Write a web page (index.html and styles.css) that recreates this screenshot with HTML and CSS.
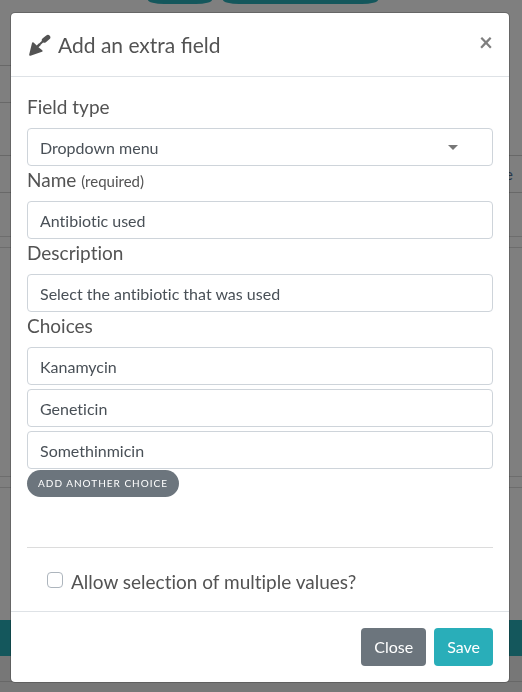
FILE: index.html
```html
<!DOCTYPE html>
<html lang="en">
<head>
<meta charset="utf-8">
<meta name="viewport" content="width=device-width, initial-scale=1">
<title>Add an extra field</title>
<link rel="stylesheet" href="styles.css">
</head>
<body>
<div class="page" aria-hidden="true">
  <div class="pills"><span class="pill"></span><span class="pill pill-wide"></span></div>
  <div class="tab"></div>
  <div class="toolbar">e</div>
  <div class="panel-end"></div>
  <div class="panel"></div>
  <div class="panel-start"></div>
  <div class="band"></div>
  <div class="page-foot"></div>
</div>
<div class="backdrop">
  <form class="modal" role="dialog" aria-labelledby="modal-title">
    <header class="modal-header">
      <h1 class="modal-title" id="modal-title">
        <svg class="trowel" viewBox="0 0 24 24" aria-hidden="true">
          <path d="M2.200 21.500 5 10Q5.500 8.600 6.600 9.600L9.700 12.500 11.800 10.400 13.600 12.200 11.500 14.300 15.300 17.300Q16.200 18.300 15 18.800L3.500 22.700Q1.900 23 2.200 21.500Z"/>
          <path d="M12.500 11.500 17 7.300" class="neck"/>
          <path d="M17.300 7.200 20.800 4.400" class="grip"/>
        </svg>
        Add an extra field
      </h1>
      <button class="close" type="button" aria-label="Dismiss">×</button>
    </header>
    <div class="modal-body">
      <label class="label" for="type">Field type</label>
      <select class="control select" id="type"><option>Dropdown menu</option></select>
      <label class="label" for="name">Name <span class="hint">(required)</span></label>
      <input class="control" id="name" type="text" value="Antibiotic used" required>
      <label class="label" for="description">Description</label>
      <input class="control" id="description" type="text" value="Select the antibiotic that was used">
      <label class="label" for="choice">Choices</label>
      <div class="choices">
        <input class="control" id="choice" type="text" value="Kanamycin">
        <input class="control" type="text" value="Geneticin" aria-label="Choice 2">
        <input class="control" type="text" value="Somethinmicin" aria-label="Choice 3">
      </div>
      <button class="add" type="button">Add another choice</button>
      <hr class="rule">
      <div class="check">
        <input class="checkbox" type="checkbox" id="multiple">
        <label for="multiple">Allow selection of multiple values?</label>
      </div>
    </div>
    <footer class="modal-footer">
      <button class="btn btn-secondary" type="button">Close</button>
      <button class="btn btn-primary" type="submit">Save</button>
    </footer>
  </form>
</div>
</body>
</html>
```
FILE: styles.css
```css
* { box-sizing: border-box; }

body {
  margin: 0;
  background: #fff;
  color: #535353;
  font-family: Lato, "Liberation Sans", sans-serif;
  font-size: 16px;
  line-height: 24px;
  font-variant-ligatures: no-common-ligatures;
  overflow: hidden;
}

button, input, select {
  font: inherit;
  font-variant-ligatures: inherit;
}

/* Page behind the dialog */
.page {
  display: flex;
  flex-direction: column;
  height: 100vh;
  overflow: hidden;
}

.pills {
  display: flex;
  gap: 11px;
  height: 65px;
  padding-left: 148px;
}

.pill {
  width: 64px;
  height: 4px;
  border-radius: 0 0 16px 16px / 0 0 4px 4px;
  background: #29aeb9;
}

.pill-wide { width: 155px; }

.tab {
  width: 50%;
  height: 38px;
  border: solid #d0d0d0;
  border-width: 1px 0;
}

.toolbar {
  height: 38px;
  margin-top: 52px;
  padding: 6px 9px;
  border: solid #d0d0d0;
  border-width: 1px 0;
  color: #4c6f94;
  text-align: right;
}

.panel-end { height: 44px; border-bottom: 1px solid #dbdbdb; }

.panel {
  height: 230px;
  margin: 10px 0;
  border: solid #dbdbdb;
  border-width: 1px 0;
}

.panel-start { height: 133px; border-top: 1px solid #dbdbdb; }

.band { height: 36px; background: #29aeb9; }

.page-foot {
  flex: 1;
  background: linear-gradient(#cfcfcf, #cfcfcf) 0 25px / 100% 1px no-repeat #efefef;
}

/* Dialog */
.backdrop {
  position: fixed;
  inset: 0;
  padding: 12px 12px 9px 10px;
  overflow: auto;
  background: rgba(0, 0, 0, 0.5);
}

.modal {
  border: 1px solid rgba(0, 0, 0, 0.2);
  border-radius: 5px;
  background: #fff;
  background-clip: padding-box;
}

.modal-header {
  display: flex;
  align-items: flex-start;
  justify-content: space-between;
  padding: 16px;
  border-bottom: 1px solid #dee2e6;
}

.modal-title {
  display: flex;
  align-items: center;
  gap: 7px;
  margin: 0;
  font-size: 21px;
  font-weight: 400;
  line-height: 31px;
  font-variant-ligatures: normal;
}

.trowel {
  width: 24px;
  height: 24px;
  fill: currentColor;
}

.neck, .grip {
  fill: none;
  stroke: currentColor;
  stroke-linecap: round;
}

.neck { stroke-width: 2; }
.grip { stroke-width: 5; }

.close {
  padding: 0;
  border: 0;
  background: none;
  color: #7f7f7f;
  font-size: 24px;
  font-weight: 700;
  line-height: 26px;
}

.modal-body { padding: 16px; }

.label {
  display: block;
  margin-bottom: 8px;
  font-size: 19px;
  line-height: 27px;
}

.hint {
  font-size: 15px;
  line-height: 20px;
}

.control {
  display: block;
  width: 100%;
  height: 38px;
  padding: 6px 12px;
  border: 1px solid #ced4da;
  border-radius: 4px;
  background: #fff;
  color: #495057;
}

.select {
  appearance: none;
  padding: 7px 12px 5px;
  background: url("data:image/svg+xml,%3Csvg xmlns='http://www.w3.org/2000/svg' viewBox='0 0 10 5'%3E%3Cpath d='M0 0h10L5 5z' fill='%23777'/%3E%3C/svg%3E") right 34px center / 10px 5px no-repeat #fff;
}

.choices {
  display: flex;
  flex-direction: column;
  gap: 4px;
}

.add {
  display: block;
  height: 27px;
  margin-top: 1px;
  padding: 0 11px;
  border: 0;
  border-radius: 14px;
  background: #6c757d;
  color: #fff;
  font-size: 10px;
  letter-spacing: 1px;
  line-height: 27px;
  text-transform: uppercase;
}

.rule {
  margin: 50px 0 20px;
  border: 0;
  border-top: 1px solid #dcdcdc;
}

.check {
  display: flex;
  align-items: flex-start;
  gap: 8px;
  padding-left: 20px;
  font-size: 19px;
  line-height: 27px;
}

.checkbox {
  appearance: none;
  width: 16px;
  height: 16px;
  margin: 4px 0 0;
  border: 1px solid #adb5bd;
  border-radius: 4px;
  background: #fff;
}

.checkbox:checked { background: #29aeb9; }

.modal-footer {
  display: flex;
  justify-content: flex-end;
  gap: 8px;
  padding: 16px;
  border-top: 1px solid #dee2e6;
}

.btn {
  height: 38px;
  padding: 0 13px;
  border: 0;
  border-radius: 4px;
  color: #fff;
}

.btn-secondary { background: #6c757d; }
.btn-primary { background: #29aeb9; }
```
